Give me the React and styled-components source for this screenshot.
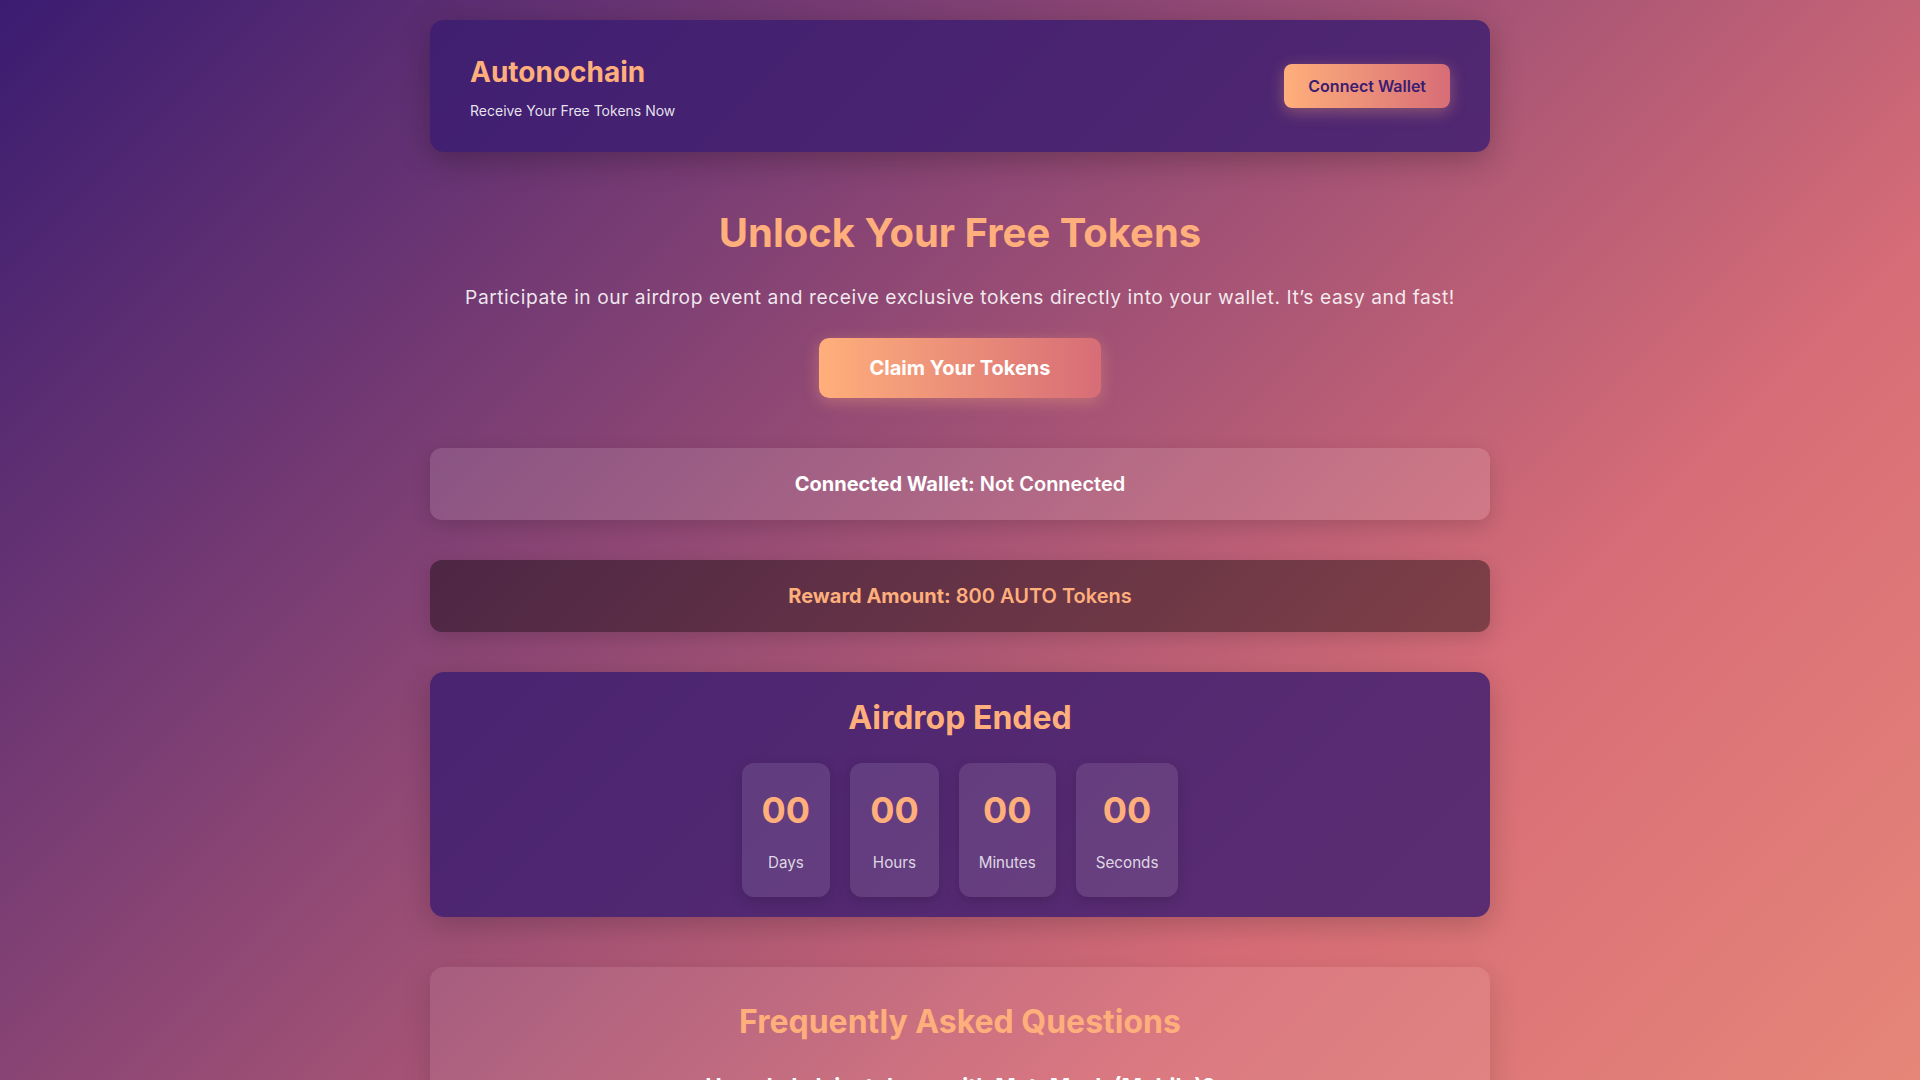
import React from "react";
import styled, { createGlobalStyle } from "styled-components";

const GlobalStyle = createGlobalStyle`
  * {
    box-sizing: border-box;
  }

  body {
    margin: 0;
    font-family: Inter, "Noto Sans", "Liberation Sans", sans-serif;
    color: #ffffff;
  }
`;

const Page = styled.div`
  min-height: 2444px;
  background: linear-gradient(135deg, #3a1c71, #d76d77, #ffaf7b);
  padding: 20px 0 60px;
`;

const Container = styled.div`
  max-width: 1060px;
  margin: 0 auto;
`;

const Header = styled.header`
  display: flex;
  align-items: center;
  justify-content: space-between;
  padding: 32px 40px;
  border-radius: 14px;
  background: rgba(58, 28, 113, 0.8);
  box-shadow: 0 8px 30px rgba(0, 0, 0, 0.25);
`;

const Brand = styled.div`
  display: flex;
  flex-direction: column;
  gap: 9px;
`;

const Logo = styled.h1`
  margin: 0;
  font-size: 28px;
  line-height: 41px;
  font-weight: 700;
  color: #ffaf7b;
`;

const Tagline = styled.p`
  margin: 0;
  font-size: 14px;
  line-height: 18px;
  color: rgba(255, 255, 255, 0.88);
`;

const GradientButton = styled.button`
  border: none;
  cursor: pointer;
  font-family: inherit;
  background: linear-gradient(90deg, #ffaf7b, #d76d77);
  color: ${(p) => (p.$dark ? "#3a1c71" : "#ffffff")};
  font-size: ${(p) => (p.$large ? "20px" : "16px")};
  font-weight: ${(p) => (p.$large ? 700 : 600)};
  line-height: ${(p) => (p.$large ? "24px" : "20px")};
  padding: ${(p) => (p.$large ? "18px 50px" : "12px 24px")};
  border-radius: ${(p) => (p.$large ? "10px" : "8px")};
  box-shadow: 0 4px 16px rgba(255, 175, 123, 0.35);
`;

const Hero = styled.section`
  display: flex;
  flex-direction: column;
  align-items: center;
  text-align: center;
  margin-top: 57px;
`;

const HeroTitle = styled.h2`
  margin: 0;
  font-size: 40px;
  line-height: 1.2;
  font-weight: 700;
  color: #ffaf7b;
`;

const HeroText = styled.p`
  margin: 25px 0 25px;
  font-size: 19.2px;
  line-height: 1.6;
  letter-spacing: 0.55px;
  color: rgba(255, 255, 255, 0.88);
`;

const InfoCard = styled.div`
  margin-top: ${(p) => p.$gap || "40px"};
  padding: 24px;
  border-radius: 12px;
  text-align: center;
  font-size: 20px;
  line-height: 24px;
  font-weight: 600;
  background: ${(p) => (p.$dim ? "rgba(0, 0, 0, 0.4)" : "rgba(255, 255, 255, 0.12)")};
  color: ${(p) => (p.$dim ? "#ffaf7b" : "#ffffff")};
  box-shadow: 0 6px 20px rgba(0, 0, 0, 0.15);
`;

const Label = styled.strong`
  font-weight: 700;
`;

const AirdropCard = styled.section`
  margin-top: 40px;
  padding: 27px 20px 20px;
  border-radius: 14px;
  background: rgba(58, 28, 113, 0.8);
  box-shadow: 0 8px 30px rgba(0, 0, 0, 0.2);
  text-align: center;
`;

const SectionTitle = styled.h2`
  margin: 0;
  font-size: 32px;
  line-height: 1.2;
  font-weight: 700;
  color: #ffaf7b;
`;

const Countdown = styled.div`
  display: flex;
  justify-content: center;
  gap: 20px;
  margin-top: 26px;
`;

const TimeBox = styled.div`
  display: flex;
  flex-direction: column;
  align-items: center;
  padding: 25px 20px 24px;
  border-radius: 12px;
  background: rgba(255, 255, 255, 0.1);
  box-shadow: 0 4px 14px rgba(0, 0, 0, 0.15);
`;

const TimeValue = styled.span`
  font-size: 36px;
  font-weight: 700;
  line-height: 45px;
  color: #ffaf7b;
`;

const TimeLabel = styled.span`
  margin-top: 20px;
  font-size: 15.2px;
  line-height: 20px;
  color: rgba(255, 255, 255, 0.8);
`;

const FaqCard = styled.section`
  margin-top: 50px;
  padding: 36px 40px 40px;
  border-radius: 14px;
  background: rgba(255, 255, 255, 0.08);
  box-shadow: 0 8px 30px rgba(0, 0, 0, 0.15);
  text-align: center;
`;

const FaqItem = styled.div`
  margin-top: 30px;
`;

const Question = styled.h3`
  margin: 0;
  font-size: 22px;
  line-height: 1.3;
  font-weight: 700;
  color: #ffffff;
`;

const Answer = styled.p`
  margin: 12px auto 0;
  max-width: 860px;
  font-size: 16px;
  line-height: 1.6;
  color: rgba(255, 255, 255, 0.85);
`;

const Footer = styled.footer`
  margin-top: 50px;
  text-align: center;
  font-size: 14px;
  color: rgba(255, 255, 255, 0.8);
`;

const timeUnits = [
  { label: "Days", value: "00" },
  { label: "Hours", value: "00" },
  { label: "Minutes", value: "00" },
  { label: "Seconds", value: "00" },
];

const faqs = [
  {
    q: "How do I claim tokens with MetaMask (Mobile)?",
    a: "Open the MetaMask app, go to the built-in browser, visit this page and tap Connect Wallet. Once connected, press Claim Your Tokens and confirm the transaction.",
  },
  {
    q: "How do I claim tokens with Trust Wallet?",
    a: "Open Trust Wallet, use the DApp browser to load this page, connect your wallet and follow the claim steps shown on screen.",
  },
  {
    q: "Which networks are supported?",
    a: "The airdrop runs on the Autonochain mainnet. Make sure your wallet is switched to the correct network before claiming.",
  },
  {
    q: "Is there a fee to claim the airdrop?",
    a: "The tokens are free. You only pay the small network gas fee required to process the claim transaction.",
  },
  {
    q: "When will I receive my tokens?",
    a: "Tokens are sent directly to your wallet as soon as the claim transaction is confirmed on the blockchain.",
  },
  {
    q: "What if the airdrop has ended?",
    a: "Follow our official channels to stay informed about upcoming events and future token distributions.",
  },
];

const App = () => {
  return (
    <>
      <GlobalStyle />
      <Page>
        <Container>
          <Header>
            <Brand>
              <Logo>Autonochain</Logo>
              <Tagline>Receive Your Free Tokens Now</Tagline>
            </Brand>
            <GradientButton $dark>Connect Wallet</GradientButton>
          </Header>

          <Hero>
            <HeroTitle>Unlock Your Free Tokens</HeroTitle>
            <HeroText>
              Participate in our airdrop event and receive exclusive tokens directly into your wallet. It’s easy and fast!
            </HeroText>
            <GradientButton $large>Claim Your Tokens</GradientButton>
          </Hero>

          <InfoCard $gap="50px">
            <Label>Connected Wallet:</Label> Not Connected
          </InfoCard>

          <InfoCard $dim>
            <Label>Reward Amount:</Label> 800 AUTO Tokens
          </InfoCard>

          <AirdropCard>
            <SectionTitle>Airdrop Ended</SectionTitle>
            <Countdown>
              {timeUnits.map((unit) => (
                <TimeBox key={unit.label}>
                  <TimeValue>{unit.value}</TimeValue>
                  <TimeLabel>{unit.label}</TimeLabel>
                </TimeBox>
              ))}
            </Countdown>
          </AirdropCard>

          <FaqCard>
            <SectionTitle>Frequently Asked Questions</SectionTitle>
            {faqs.map((item) => (
              <FaqItem key={item.q}>
                <Question>{item.q}</Question>
                <Answer>{item.a}</Answer>
              </FaqItem>
            ))}
          </FaqCard>

          <Footer>© 2024 Autonochain. All rights reserved.</Footer>
        </Container>
      </Page>
    </>
  );
};

export default App;
